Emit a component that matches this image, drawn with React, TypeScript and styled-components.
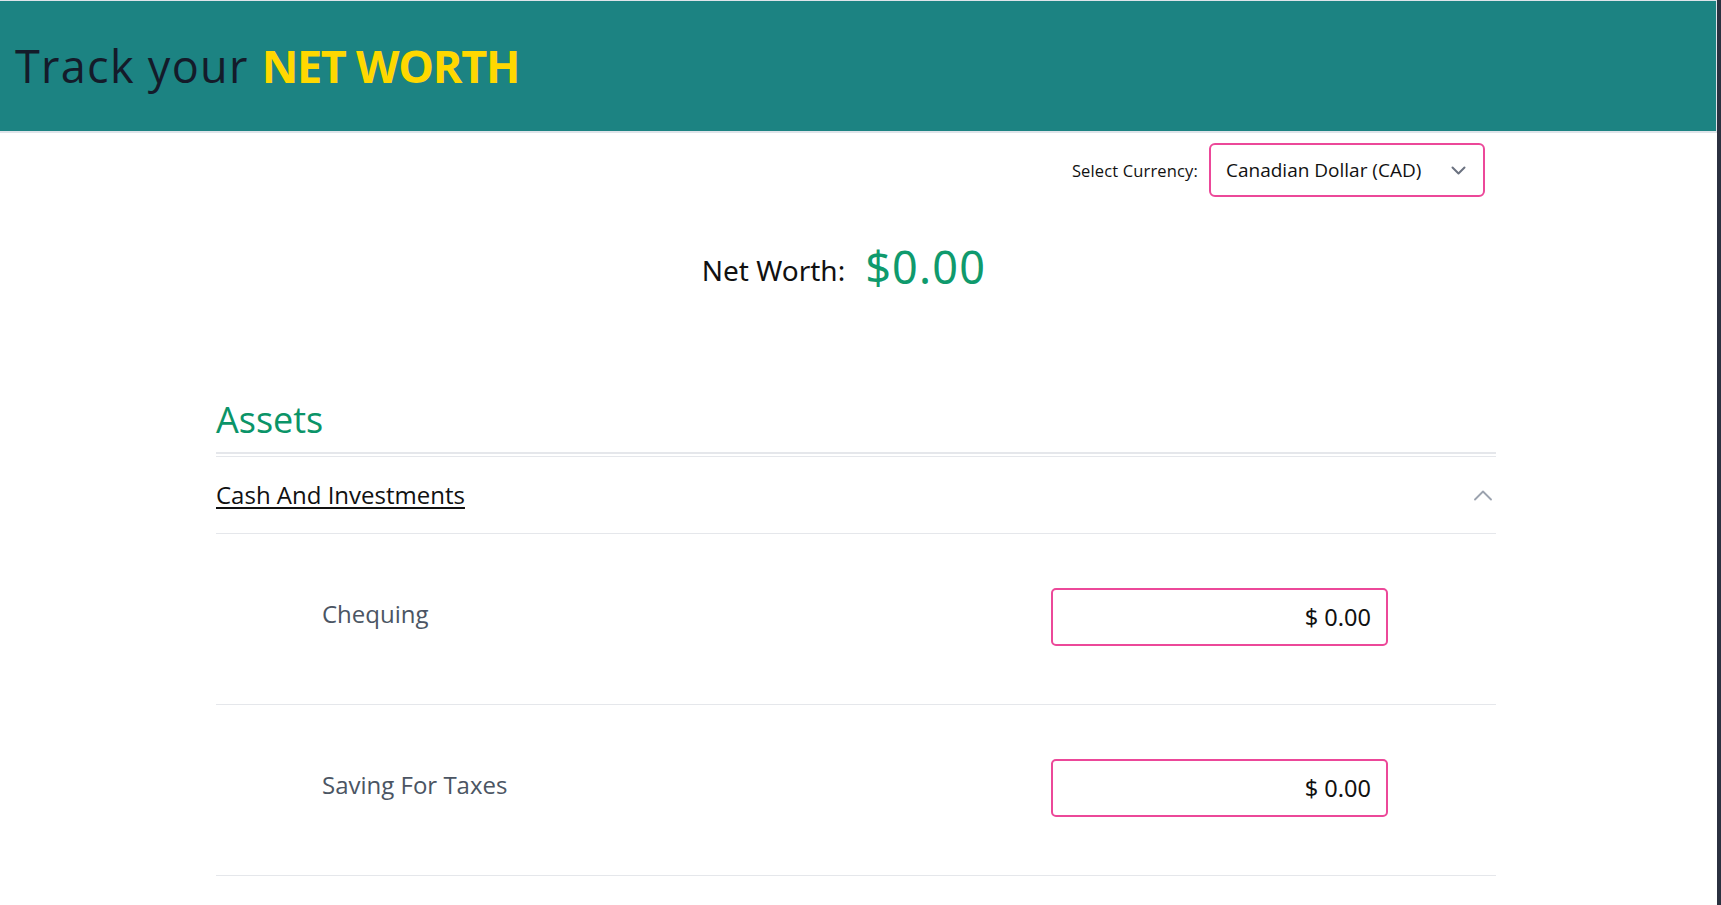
import React from "react";
import styled, { createGlobalStyle } from "styled-components";

const GlobalStyle = createGlobalStyle`
  html {
    background: #2b3140;
  }
  body {
    margin: 0 4px 0 0;
    min-height: 100vh;
    background: #ffffff;
    font-family: "Open Sans", "Noto Sans", sans-serif;
    color: #111111;
  }
  * {
    box-sizing: border-box;
  }
`;

const Page = styled.div`
  display: flex;
  flex-direction: column;
  min-height: 100vh;
`;

const Header = styled.header`
  height: 133px;
  background: #1c8382;
  border-top: 1px solid #dfe4ea;
  border-right: 1px solid #dfe4ea;
  border-bottom: 2px solid #dfe4ea;
  display: flex;
  align-items: center;
  padding-left: 15px;
`;

const Title = styled.h1`
  margin: 0;
  font-family: "Open Sans", sans-serif;
  font-weight: 400;
  font-size: 45px;
  line-height: 1.2;
  letter-spacing: 1.3px;
  color: #141b2a;
`;

const Highlight = styled.span`
  color: #ffd800;
  font-weight: 700;
  letter-spacing: -1.3px;
`;

const Main = styled.main`
  padding-right: 5px;
`;

const Container = styled.div`
  width: 1280px;
  margin: 0 auto;
  display: flex;
  flex-direction: column;
`;

const CurrencyBar = styled.div`
  display: flex;
  justify-content: flex-end;
  align-items: center;
  gap: 11px;
  margin-top: 10px;
  padding-right: 11px;
`;

const CurrencyLabel = styled.label`
  font-family: "Open Sans", sans-serif;
  font-size: 16.5px;
  color: #111111;
  letter-spacing: 0.15px;
`;

const SelectBox = styled.div`
  width: 276px;
  height: 54px;
  border: 2px solid #ec4899;
  border-radius: 6px;
  display: flex;
  align-items: center;
  justify-content: space-between;
  padding: 0 17px 0 15px;
  font-family: "Open Sans", sans-serif;
  font-size: 19px;
  color: #111111;
`;

const NetWorthRow = styled.div`
  display: flex;
  justify-content: center;
  align-items: flex-end;
  gap: 20px;
  margin-top: 43px;
  padding-right: 24px;
`;

const NetWorthLabel = styled.span`
  font-family: "Noto Sans", "Open Sans", sans-serif;
  font-size: 28px;
  line-height: 1.2;
  color: #111111;
  margin-bottom: 6px;
`;

const NetWorthValue = styled.span`
  font-family: "Noto Sans", "Open Sans", sans-serif;
  font-size: 45px;
  line-height: 1.2;
  letter-spacing: 1.2px;
  color: #0f9a6d;
`;

const SectionTitle = styled.h2`
  margin: 104px 0 0;
  font-family: "Open Sans", sans-serif;
  font-weight: 400;
  font-size: 36px;
  line-height: 1.2;
  color: #0b9468;
  padding-bottom: 11px;
  border-bottom: 2px solid #e5e7eb;
`;

const Accordion = styled.section`
  margin-top: 2px;
  border-top: 1px solid #e5e7eb;
`;

const AccordionHeader = styled.div`
  display: flex;
  align-items: center;
  justify-content: space-between;
  height: 77px;
  padding-right: 4px;
  border-bottom: 1px solid #e5e7eb;
`;

const AccordionTitle = styled.span`
  font-family: "Open Sans", sans-serif;
  font-size: 24px;
  line-height: 32px;
  color: #111111;
  text-decoration: underline;
  text-decoration-thickness: 1.5px;
  text-underline-offset: 3px;
`;

const Row = styled.div`
  display: flex;
  align-items: center;
  justify-content: space-between;
  height: 171px;
  padding: 0 108px 4px 106px;
  border-bottom: 1px solid #e5e7eb;
`;

const RowLabel = styled.span`
  font-family: "Open Sans", sans-serif;
  font-size: 24px;
  color: #4b5563;
  margin-bottom: 8px;
`;

const AmountInput = styled.div`
  width: 337px;
  height: 58px;
  border: 2px solid #ec4899;
  border-radius: 5px;
  display: flex;
  align-items: center;
  justify-content: flex-end;
  padding-right: 15px;
  font-family: "Noto Sans", "Open Sans", sans-serif;
  font-size: 23.5px;
  color: #111111;
`;

const ChevronDown = () => (
  <svg width="15" height="9" viewBox="0 0 15 9" fill="none">
    <path d="M1.5 1.5 L7.5 7.5 L13.5 1.5" stroke="#6b7280" strokeWidth="2" strokeLinecap="round" strokeLinejoin="round" />
  </svg>
);

const ChevronUp = () => (
  <svg width="18" height="11" viewBox="0 0 18 11" fill="none">
    <path d="M1 9.5 L9 1.5 L17 9.5" stroke="#9ca3af" strokeWidth="1.8" strokeLinecap="round" strokeLinejoin="round" />
  </svg>
);

const items = [
  { label: "Chequing", value: "$ 0.00" },
  { label: "Saving For Taxes", value: "$ 0.00" },
];

export default function App() {
  return (
    <>
      <GlobalStyle />
      <Page>
        <Header>
          <Title>
            Track your <Highlight>NET WORTH</Highlight>
          </Title>
        </Header>
        <Main>
          <Container>
            <CurrencyBar>
              <CurrencyLabel>Select Currency:</CurrencyLabel>
              <SelectBox>
                <span>Canadian Dollar (CAD)</span>
                <ChevronDown />
              </SelectBox>
            </CurrencyBar>
            <NetWorthRow>
              <NetWorthLabel>Net Worth:</NetWorthLabel>
              <NetWorthValue>$0.00</NetWorthValue>
            </NetWorthRow>
            <SectionTitle>Assets</SectionTitle>
            <Accordion>
              <AccordionHeader>
                <AccordionTitle>Cash And Investments</AccordionTitle>
                <ChevronUp />
              </AccordionHeader>
              {items.map((it) => (
                <Row key={it.label}>
                  <RowLabel>{it.label}</RowLabel>
                  <AmountInput>{it.value}</AmountInput>
                </Row>
              ))}
            </Accordion>
          </Container>
        </Main>
      </Page>
    </>
  );
}
